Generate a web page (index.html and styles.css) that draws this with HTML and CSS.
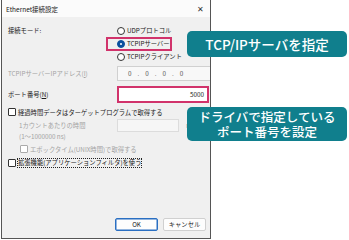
FILE: index.html
```html
<!DOCTYPE html>
<html lang="ja">
<head>
  <meta charset="UTF-8">
  <title>Ethernet接続設定</title>
  <link rel="stylesheet" href="styles.css">
</head>
<body>

<div class="stage">

  <!-- dialog window -->
  <div class="dialog">
    <div class="titlebar">
      <span>Ethernet接続設定</span>
      <span class="close">✕</span>
    </div>

    <div class="content">
      <div class="form-row mode-row">
        <div class="label">接続モード:</div>
        <div class="radios">
          <div class="radio"><span class="dot"></span>UDPプロトコル</div>
          <div class="radio"><span class="dot on"></span>TCPIPサーバー</div>
          <div class="radio"><span class="dot"></span>TCPIPクライアント</div>
        </div>
      </div>

      <div class="form-row ip-row">
        <div class="label muted">TCPIPサーバーIPアドレス(<u>I</u>)</div>
        <div class="ipbox">
          <span>0</span><span>.</span><span>0</span><span>.</span><span>0</span><span>.</span><span>0</span>
        </div>
      </div>

      <div class="form-row port-row">
        <div class="label">ポート番号(<u>N</u>)</div>
        <div class="portbox">5000</div>
      </div>

      <div class="check check1"><span class="box"></span>経過時間データはターゲットプログラムで取得する</div>

      <div class="form-row count-row">
        <div class="label muted sub">1カウントあたりの時間</div>
        <div class="countwrap">
          <div class="countbox"></div>
          <span class="muted">ns</span>
        </div>
      </div>
      <div class="muted sub range">(1〜1000000 ns)</div>

      <div class="check epoch muted"><span class="box"></span>エポックタイム(UNIX時間)で取得する</div>

      <div class="check ext"><span class="box"></span><span class="focus">拡張機能(アプリケーションフィルタ)を使う</span></div>

      <div class="buttons">
        <button class="btn default">OK</button>
        <button class="btn">キャンセル</button>
      </div>
    </div>
  </div>

  <!-- annotations -->
  <div class="mark"></div>
  <div class="callout c1">TCP/IPサーバを指定</div>
  <div class="callout c2">
    <span class="line">ドライバで指定している</span>
    <span class="line">ポート番号を設定</span>
  </div>

</div>

</body>
</html>
```

FILE: styles.css
```css
html, body {
  margin: 0;
  background: #fff;
}

.stage {
  position: relative;
  width: 349px;
  height: 240px;
  overflow: hidden;
  font-family: "Noto Sans CJK JP", "Noto Sans", sans-serif;
  font-size: 6.3px;
  color: #1a1a1a;
}

/* Dialog window */
.dialog {
  margin-left: 1px;
  width: 208px;
  height: 238px;
  border: 1px solid #555;
  border-top: none;
  display: flex;
  flex-direction: column;
  background: #f0f0f0;
}

.titlebar {
  height: 17px;
  background: #fbfbfb;
  display: flex;
  align-items: center;
  justify-content: space-between;
  padding: 0 6px 0 4px;
  font-size: 6.5px;
}

.close {
  font-size: 8px;
  color: #333;
}

.content {
  flex: 1;
  display: flex;
  flex-direction: column;
  padding: 7px 0 0 6px;
}

.form-row {
  display: grid;
  grid-template-columns: 109px 1fr;
  align-items: center;
}

.label {
  white-space: nowrap;
}

.muted {
  color: #a3a3a3;
}

.sub {
  padding-left: 11px;
}

/* Radio group */
.mode-row {
  align-items: start;
}

.mode-row .label {
  line-height: 13px;
}

.radio {
  height: 13px;
  display: flex;
  align-items: center;
  gap: 2px;
}

.dot {
  width: 6px;
  height: 6px;
  border: 1px solid #333;
  border-radius: 50%;
  background: #fff;
  box-sizing: content-box;
  position: relative;
}

.dot.on {
  border-color: #0a4f9e;
  background: #0a4f9e;
}

.dot.on::after {
  content: "";
  position: absolute;
  left: 2px;
  top: 2px;
  width: 2px;
  height: 2px;
  border-radius: 50%;
  background: #fff;
}

/* Inputs */
.ip-row {
  margin-top: 3px;
}

.ipbox {
  height: 13px;
  border: 1px solid #d0d0d0;
  border-right: none;
  background: #f8f8f8;
  display: flex;
  align-items: center;
  gap: 6px;
  padding-left: 10px;
  color: #555;
}

.port-row {
  margin-top: 5px;
}

.portbox {
  height: 13px;
  margin-right: 1px;
  border: 2px solid #d1336b;
  background: #fff;
  display: flex;
  align-items: center;
  justify-content: flex-end;
  padding-right: 3px;
}

/* Checkboxes */
.check {
  display: flex;
  align-items: center;
  gap: 2px;
  height: 12px;
  white-space: nowrap;
}

.box {
  width: 6px;
  height: 6px;
  border: 1px solid #333;
  border-radius: 1px;
  background: #fff;
  flex: none;
}

.check1 {
  margin-top: 3px;
}

.count-row {
  margin-top: 1px;
}

.countwrap {
  display: flex;
  align-items: center;
  gap: 7px;
}

.countbox {
  width: 60px;
  height: 11px;
  border: 1px solid #dcdcdc;
  background: #f6f6f6;
}

.range {
  line-height: 10px;
}

.epoch {
  margin-top: 1px;
  padding-left: 12px;
}

.epoch .box {
  border-color: #aaa;
}

.ext {
  margin-top: 2px;
}

.focus {
  outline: 1px dotted #222;
  line-height: 8px;
}

/* Buttons */
.buttons {
  margin-top: auto;
  margin-bottom: 7px;
  display: flex;
  justify-content: flex-end;
  gap: 5px;
  padding-right: 4px;
}

.btn {
  width: 43px;
  height: 13px;
  padding: 0;
  font-family: inherit;
  font-size: 6.3px;
  color: #1a1a1a;
  background: #fdfdfd;
  border: 1px solid #d0d0d0;
  border-radius: 2px;
}

.btn.default {
  border: 1px solid #2a6fc2;
  box-shadow: inset 0 0 0 0.5px #2a6fc2;
}

/* Annotations */
.mark {
  position: absolute;
  left: 106px;
  top: 37px;
  width: 62px;
  height: 10px;
  border: 2px solid #d1336b;
}

.callout {
  position: absolute;
  left: 187px;
  width: 160px;
  background: #107f8d;
  color: #fff;
  border-radius: 5px;
  text-align: center;
  font-weight: 500;
  box-sizing: border-box;
}

.c1 {
  top: 31px;
  height: 26px;
  line-height: 26px;
  font-size: 13.5px;
}

.c2 {
  top: 107px;
  height: 34px;
  padding-top: 2px;
  font-size: 12.5px;
}

.c2 .line {
  display: block;
  height: 15px;
  line-height: 15px;
}
```
